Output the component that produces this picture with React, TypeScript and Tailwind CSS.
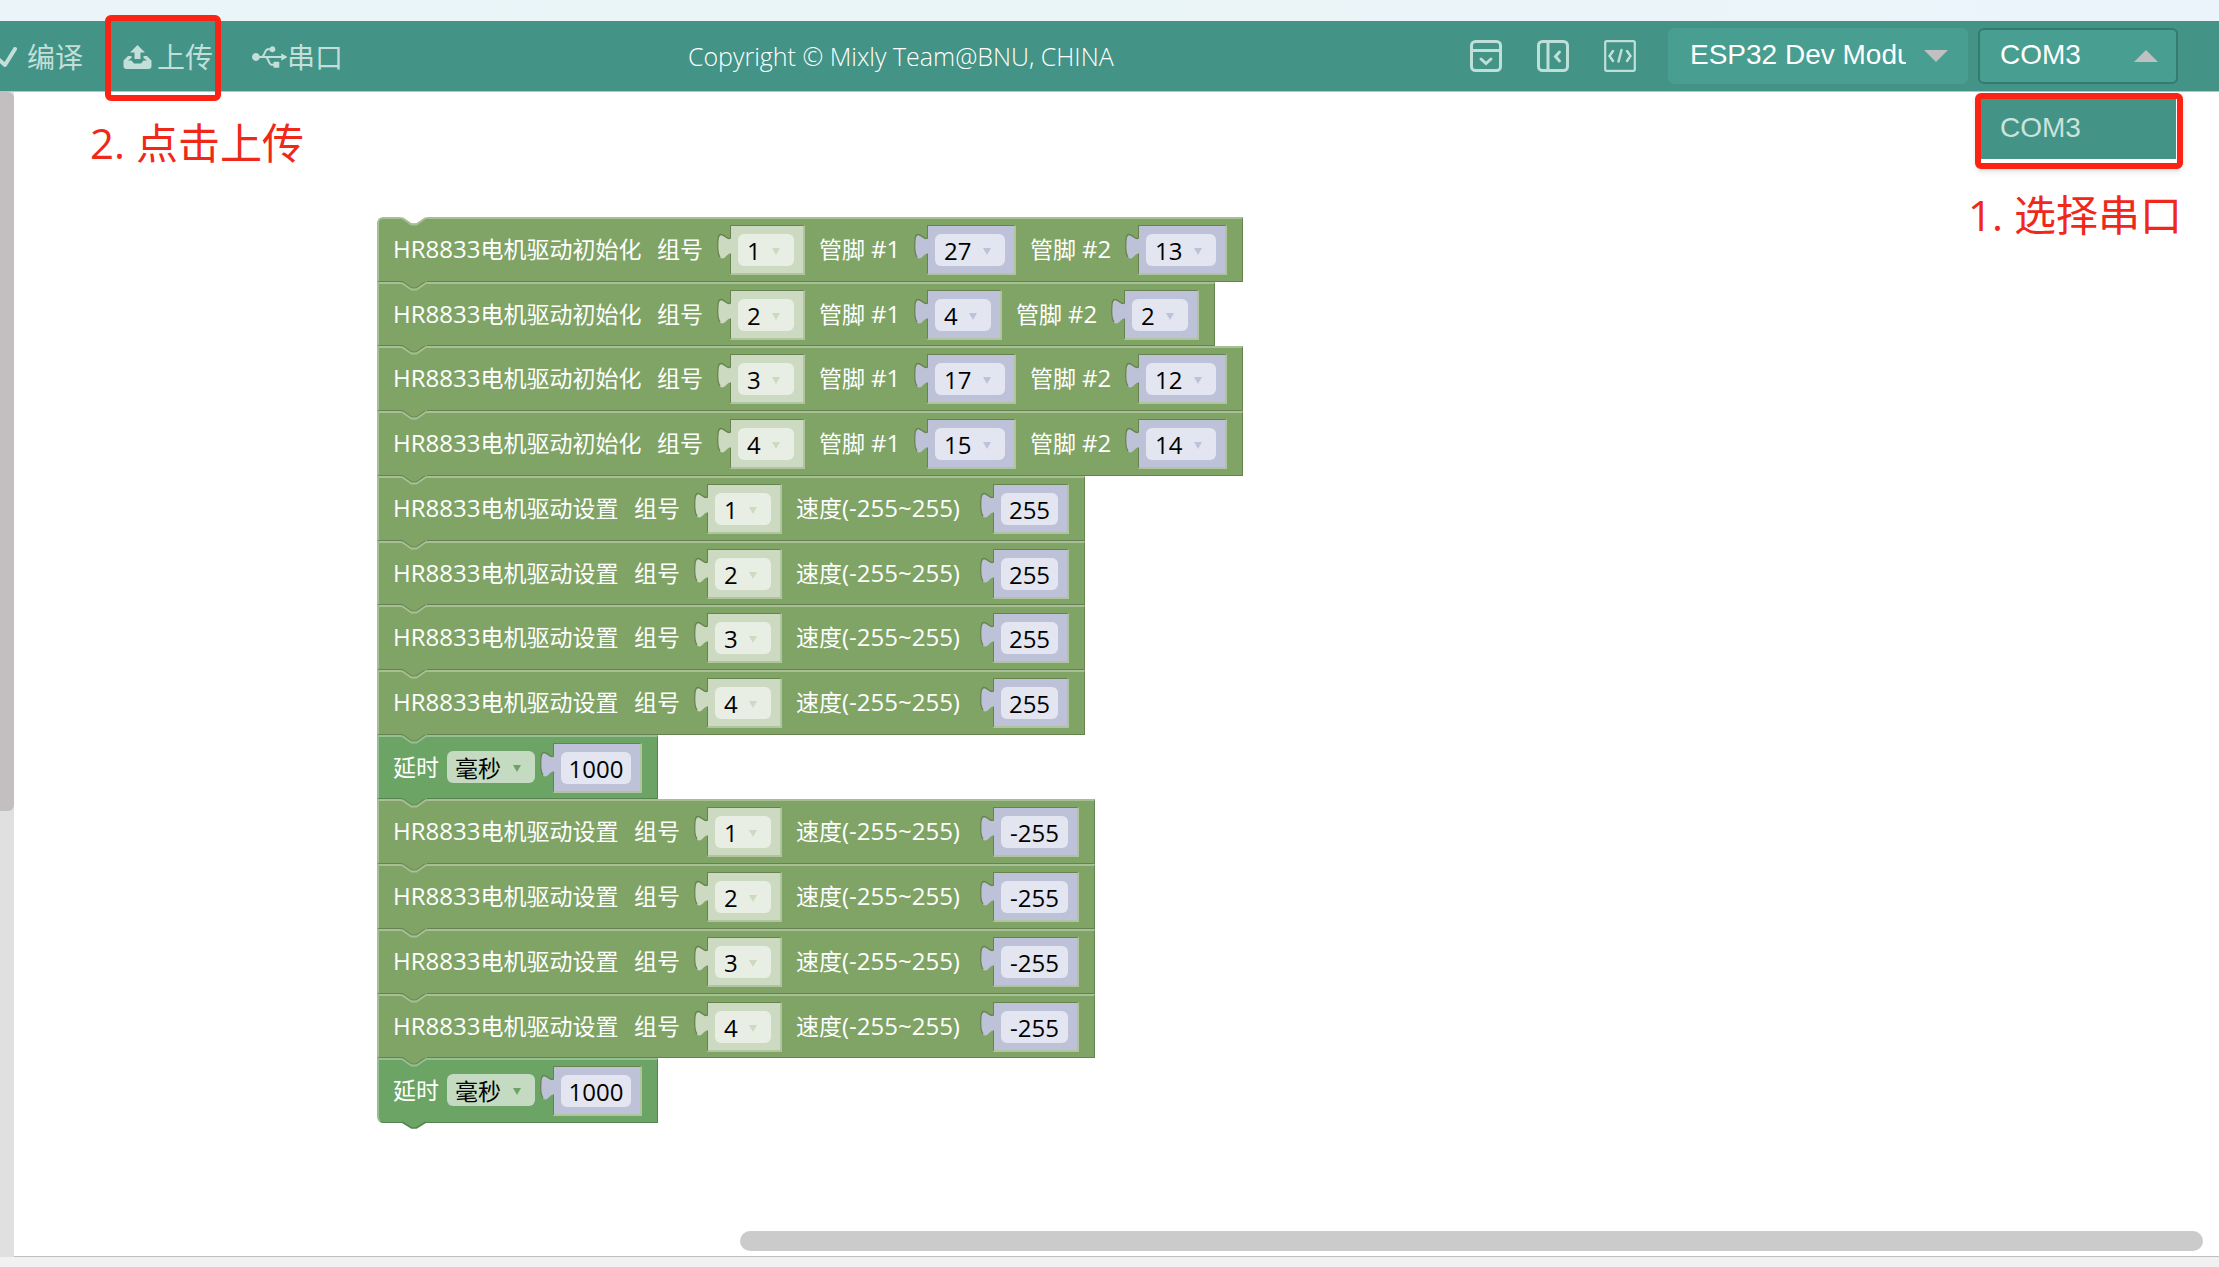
import type { ReactNode } from "react";
import { FaUsb } from "react-icons/fa";

const OLIVE = "#80a465";
const GREEN = "#6ba465";

type Row =
  | { kind: "init"; group: string; pin1: string; pin2: string }
  | { kind: "set"; group: string; speed: string }
  | { kind: "delay"; ms: string };

const rows: Row[] = [
  { kind: "init", group: "1", pin1: "27", pin2: "13" },
  { kind: "init", group: "2", pin1: "4", pin2: "2" },
  { kind: "init", group: "3", pin1: "17", pin2: "12" },
  { kind: "init", group: "4", pin1: "15", pin2: "14" },
  { kind: "set", group: "1", speed: "255" },
  { kind: "set", group: "2", speed: "255" },
  { kind: "set", group: "3", speed: "255" },
  { kind: "set", group: "4", speed: "255" },
  { kind: "delay", ms: "1000" },
  { kind: "set", group: "1", speed: "-255" },
  { kind: "set", group: "2", speed: "-255" },
  { kind: "set", group: "3", speed: "-255" },
  { kind: "set", group: "4", speed: "-255" },
  { kind: "delay", ms: "1000" },
];

const colorOf = (r?: Row) => (!r ? "#ffffff" : r.kind === "delay" ? GREEN : OLIVE);

/* Puzzle tab that plugs a value block into its parent */
function Tab({ color }: { color: string }) {
  return (
    <svg className="relative z-10 mt-1.5 -mr-0.5 h-[50px] w-[15px] shrink-0" viewBox="0 0 15 50" aria-hidden="true">
      <path
        d="M15 13.5H12C9.500 14.500 7.500 10 4 9.500C1 9.500 .5 15 .5 21C.5 29 2.500 33.500 5.500 33.500C8 33.500 10 29 13 28.500H15Z"
        fill={color}
      />
      <path
        d="M13.500 13C10 15.500 7.500 9.500 4 9.500C1 9.500 .7 15 .7 21C.7 27 1.500 30 3 32"
        fill="none"
        stroke="#66834f"
        strokeWidth="1.300"
      />
    </svg>
  );
}

function Caret({ color }: { color: string }) {
  return (
    <svg className="pointer-events-none absolute right-3.5 top-3.5 h-[7px] w-2" viewBox="0 0 8 7" aria-hidden="true">
      <path d="M0 0H8L4 7Z" fill={color} />
    </svg>
  );
}

function Value({
  label,
  value,
  tone,
  dropdown,
}: {
  label: string;
  value: string;
  tone: "pale" | "lilac";
  dropdown?: boolean;
}) {
  const color = tone === "pale" ? "#ccdac1" : "#bec2d9";
  const wrap = tone === "pale" ? "bg-[#ccdac1]" : "bg-[#bec2d9]";
  const inner = tone === "pale" ? "bg-[#e8eee3]" : "bg-[#e3e6f0]";
  const width = dropdown
    ? value.length > 1
      ? "w-[70px]"
      : "w-14"
    : value === "255"
      ? "w-[57px]"
      : value === "-255"
        ? "w-[67px]"
        : "w-[70px]";
  return (
    <div className="flex shrink-0 items-start">
      <Tab color={color} />
      <div
        className={`mt-1.5 h-[50px] border-t border-r-2 border-b-2 border-l border-t-[#66834f] border-l-[#66834f] border-r-[#b0c49f] border-b-[#b0c49f] pt-2 pr-[9px] pl-[7px] ${wrap}`}
      >
        <div className={`relative h-8 rounded-md ${inner} ${width}`}>
          {dropdown ? (
            <>
              <select
                aria-label={label}
                className="h-8 w-full appearance-none bg-transparent pl-[9px] text-2xl leading-8 text-black outline-none"
                defaultValue={value}
              >
                <option>{value}</option>
              </select>
              <Caret color={color} />
            </>
          ) : (
            <input
              aria-label={label}
              className="h-8 w-full bg-transparent text-center text-2xl leading-8 text-black outline-none"
              defaultValue={value}
            />
          )}
        </div>
      </div>
    </div>
  );
}

function Label({ w, children }: { w: string; children: ReactNode }) {
  return <span className={`mt-3.5 h-8 shrink-0 whitespace-nowrap leading-8 ${w}`}>{children}</span>;
}

function Latin({ children }: { children: ReactNode }) {
  return <span className="text-2xl leading-8">{children}</span>;
}

function Block({ row, prev, last }: { row: Row; prev?: Row; last: boolean }) {
  const delay = row.kind === "delay";
  const skin = delay
    ? "bg-[#6ba465] border-t-[#98bf93] border-l-[#98bf93] border-r-[#56834f] border-b-[#56834f]"
    : "bg-[#80a465] border-t-[#a6bf94] border-l-[#a6bf94] border-r-[#66834f] border-b-[#66834f]";
  return (
    <div
      className={`relative flex min-h-0 flex-1 items-start border-t-2 border-r border-b border-l-2 pr-[15px] pl-3.5 ${skin} ${
        prev ? "" : "rounded-tl-md"
      } ${last ? "rounded-bl-md" : ""}`}
    >
      <svg className="absolute -top-[3px] left-[22px] h-[11px] w-[26px]" viewBox="0 0 26 11" aria-hidden="true">
        <path d="M0 0H26V1.500H24L15.500 7.500H10.500L2 1.500H0Z" fill={colorOf(prev)} />
        {prev && <path d="M0 .5H0L2 1L10.500 7H15.500L24 1" fill="none" stroke="#66834f" strokeWidth="1.200" />}
        <path
          d="M1 2L10.500 8.500H15.500L25 2"
          fill="none"
          stroke={delay ? "#98bf93" : "#a6bf94"}
          strokeWidth="1.800"
        />
      </svg>
      {last && (
        <svg className="absolute -bottom-[7px] left-[22px] h-2 w-[26px]" viewBox="0 0 26 8" aria-hidden="true">
          <path d="M1 0H25V1L15.500 7H10.500L1 1Z" fill={GREEN} />
          <path d="M1 1L10.500 7H15.500L25 1" fill="none" stroke="#56834f" strokeWidth="1.500" />
        </svg>
      )}
      {row.kind === "init" && (
        <>
          <Label w="w-[264px]">
            <Latin>HR8833</Latin>电机驱动初始化
          </Label>
          <Label w="w-[60px]">组号</Label>
          <Value label="组号" value={row.group} tone="pale" dropdown />
          <Label w="ml-3.5 w-[95px]">
            管脚 <Latin>#1</Latin>
          </Label>
          <Value label="管脚 #1" value={row.pin1} tone="lilac" dropdown />
          <Label w="ml-3.5 w-[95px]">
            管脚 <Latin>#2</Latin>
          </Label>
          <Value label="管脚 #2" value={row.pin2} tone="lilac" dropdown />
        </>
      )}
      {row.kind === "set" && (
        <>
          <Label w="w-[241px]">
            <Latin>HR8833</Latin>电机驱动设置
          </Label>
          <Label w="w-[60px]">组号</Label>
          <Value label="组号" value={row.group} tone="pale" dropdown />
          <Label w="ml-3.5 w-[184px]">
            速度<Latin>(-255~255)</Latin>
          </Label>
          <Value label="速度" value={row.speed} tone="lilac" />
        </>
      )}
      {row.kind === "delay" && (
        <>
          <Label w="w-[54px]">延时</Label>
          <div className="relative mt-3.5 mr-[5px] h-8 w-[88px] rounded-md bg-[#c4dac1]">
            <select
              aria-label="延时单位"
              className="h-8 w-full appearance-none bg-transparent pl-2 text-[23px] leading-8 text-black outline-none"
              defaultValue="毫秒"
            >
              <option>毫秒</option>
            </select>
            <Caret color={GREEN} />
          </div>
          <Value label="延时" value={row.ms} tone="lilac" />
        </>
      )}
    </div>
  );
}

function UploadIcon() {
  return (
    <svg className="h-6 w-[29px]" viewBox="0 0 29 24" fill="currentColor" aria-hidden="true">
      <path d="M14.500 0L22 7.500H17.500V14H11.500V7.500H7Z" />
      <path d="M5 11H8.500V13L5 15.500H8.500L11 18.500H18L20.500 15.500H24L20.500 13V11H24L28.500 15.500V21Q28.500 24 25.500 24H3.500Q.5 24 .5 21V15.500Z" />
    </svg>
  );
}

function HeaderButton({ children, className }: { children: ReactNode; className: string }) {
  return (
    <button type="button" className={`flex items-center whitespace-nowrap text-[28px] leading-10 text-[#c2dfd9] ${className}`}>
      {children}
    </button>
  );
}

export default function App() {
  return (
    <div className="relative flex h-screen flex-col overflow-hidden bg-white font-['Open_Sans','Noto_Sans_CJK_SC',sans-serif]">
      <div className="h-[21px] shrink-0 bg-linear-to-r from-[#ebf5f9] via-[#eaf5f7] to-[#ebf4fb]" />
      <header className="flex h-[71px] shrink-0 items-start justify-between border-b border-[#a9cbc4] bg-[#439386]">
        <nav className="flex w-[31%] items-start pt-4">
          <HeaderButton className="w-[123px]">
            <svg className="mr-2.5 h-[21px] w-[17px]" viewBox="0 0 17 21" fill="none" stroke="currentColor" aria-hidden="true">
              <path d="M-3 11L5 18L15 2" strokeWidth="4" strokeLinecap="round" strokeLinejoin="round" />
            </svg>
            编译
          </HeaderButton>
          <HeaderButton className="w-[129px] gap-[5px]">
            <UploadIcon />
            上传
          </HeaderButton>
          <HeaderButton className="">
            <FaUsb className="h-7 w-[35px]" />
            串口
          </HeaderButton>
        </nav>
        <p className="flex-1 pt-[15px] text-[25px] leading-10 font-light whitespace-nowrap text-white">
          Copyright © Mixly Team@BNU, CHINA
        </p>
        <div className="flex shrink-0 items-start justify-end pt-[7px] pr-[41px] font-['Liberation_Sans',Arial,sans-serif]">
          <div className="flex gap-[35px] pt-3 pr-8 text-[#bfe0d8]">
            <button type="button" aria-label="折叠底部面板">
              <svg className="size-8" viewBox="0 0 32 32" fill="none" stroke="currentColor" strokeWidth="3" aria-hidden="true">
                <rect x="1.500" y="1.500" width="29" height="29" rx="4" />
                <path d="M2 10.500H30" />
                <path d="M11 19L16 23.500L21 19" strokeLinecap="round" />
              </svg>
            </button>
            <button type="button" aria-label="折叠侧栏">
              <svg className="size-8" viewBox="0 0 32 32" fill="none" stroke="currentColor" strokeWidth="3" aria-hidden="true">
                <rect x="1.500" y="1.500" width="29" height="29" rx="4" />
                <path d="M11 2V30" />
                <path d="M22.500 12L18.500 16.500L22.500 21" strokeLinecap="round" />
              </svg>
            </button>
            <button type="button" aria-label="查看代码">
              <svg className="size-8" viewBox="0 0 32 32" fill="none" stroke="currentColor" strokeWidth="2.200" aria-hidden="true">
                <rect x="1.200" y="1.200" width="29.600" height="29.600" rx="1.500" />
                <path d="M9 11L5.500 16L9 21M23 11L26.500 16L23 21M17.500 10L14.500 21.500" strokeWidth="2.500" strokeLinecap="round" />
              </svg>
            </button>
          </div>
          <div className="relative mr-2.5 h-14 w-[300px] rounded-md bg-[#489e90]">
            <select
              aria-label="开发板"
              className="h-14 w-full appearance-none bg-transparent pr-[62px] pb-0.5 pl-[22px] text-[28px] text-white outline-none"
              defaultValue="ESP32 Dev Module"
            >
              <option>ESP32 Dev Module</option>
            </select>
            <svg className="pointer-events-none absolute top-[22px] right-5 h-3 w-6" viewBox="0 0 24 12" aria-hidden="true">
              <path d="M0 0H24L12 12Z" fill="#c0c0c0" />
            </svg>
          </div>
          <div className="relative h-14 w-[200px] rounded-md border-2 border-[#327b6e] bg-[#489e90]">
            <select
              aria-label="端口"
              className="h-[52px] w-full appearance-none bg-transparent pb-0.5 pl-5 text-[28px] text-white outline-none"
              defaultValue="COM3"
            >
              <option>COM3</option>
            </select>
            <svg className="pointer-events-none absolute top-5 right-[18px] h-3 w-6" viewBox="0 0 24 12" aria-hidden="true">
              <path d="M0 12H24L12 0Z" fill="#c0c0c0" />
            </svg>
            <div className="absolute top-[63px] -left-[5px] h-[76px] w-[208px] rounded-md border-6 border-[#fb2313] bg-white shadow-md">
              <button
                type="button"
                className="block h-[60px] w-[195px] bg-[#439386] pb-0.5 pl-[19px] text-left text-[28px] text-[#c9e3dd]"
              >
                COM3
              </button>
            </div>
          </div>
        </div>
      </header>

      <main className="relative flex min-h-0 flex-1">
        <div className="w-3.5 shrink-0 bg-[#e0e0e0]">
          <div className="h-[719px] rounded-r-md bg-[#c3bfc1]" />
        </div>
        <div className="flex min-w-0 flex-1 flex-col justify-between border-b border-[#bfbfbf]">
          <div className="flex h-[1031px] pt-[125px] pl-[363px]">
            <div className="flex flex-1 flex-col items-start text-[23px] text-white">
              {rows.map((row, i) => (
                <Block key={i} row={row} prev={rows[i - 1]} last={i === rows.length - 1} />
              ))}
            </div>
          </div>
          <div className="mr-4 mb-[5px] ml-[726px] h-5 shrink-0 rounded-full bg-[#cbcbcb]" />
        </div>
        <p className="absolute top-[21px] left-[90px] text-[42px] leading-[60px] text-[#f0281a]">2. 点击上传</p>
        <p className="absolute top-[93px] right-[37px] text-[42px] leading-[60px] text-[#f0281a]">1. 选择串口</p>
      </main>
      <footer className="h-2.5 shrink-0 bg-[#f1f1f1]" />
      <div className="pointer-events-none absolute top-[15px] left-[105px] h-[86px] w-[116px] rounded-md border-6 border-[#fb2313]" />
    </div>
  );
}
